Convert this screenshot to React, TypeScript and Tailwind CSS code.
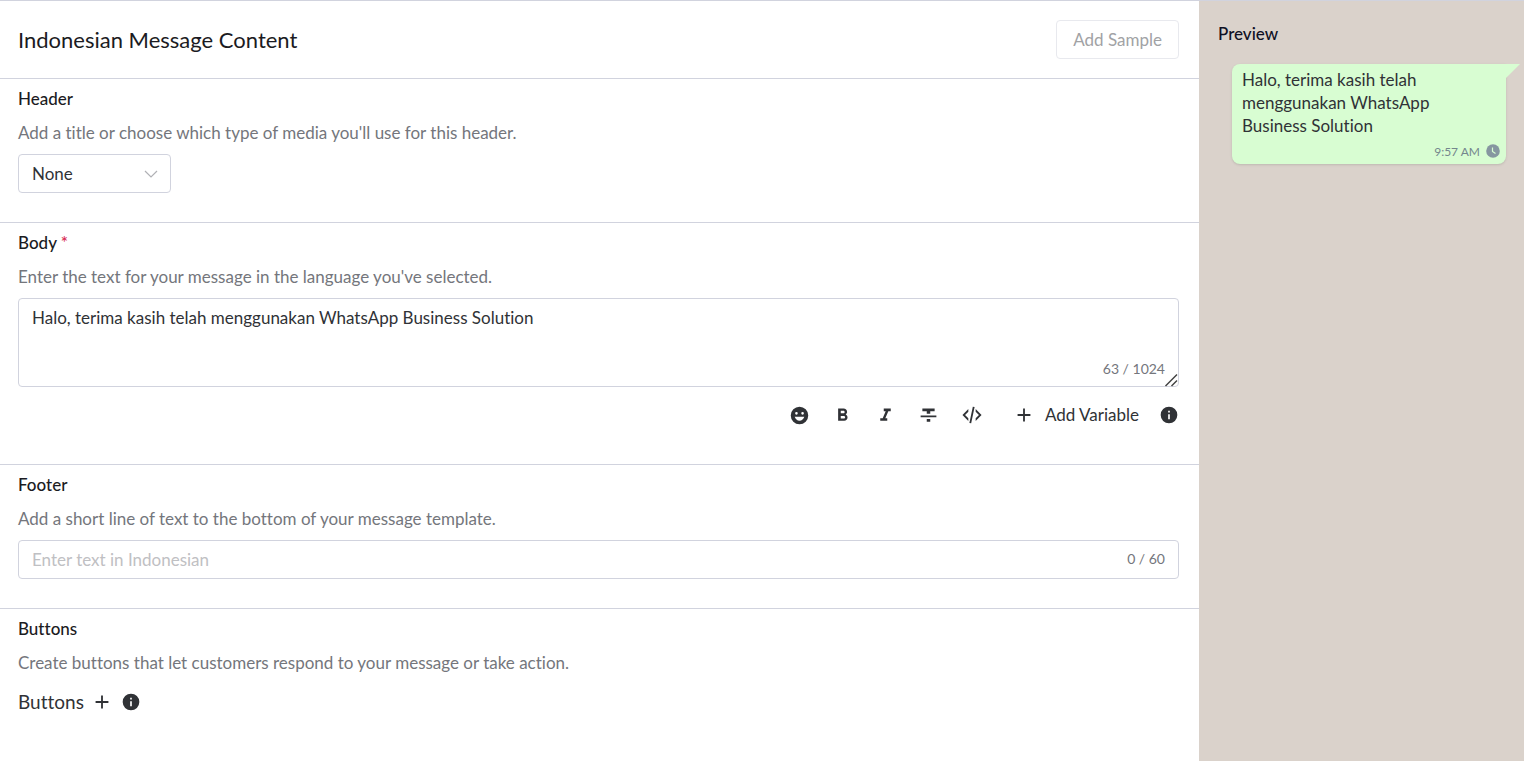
import { useState, type ReactNode } from "react";
import { MdFormatBold, MdFormatItalic, MdFormatStrikethrough } from "react-icons/md";

const BODY_TEXT = "Halo, terima kasih telah menggunakan WhatsApp Business Solution";

interface SectionProps {
  title: string;
  description: string;
  htmlFor?: string;
  required?: boolean;
  children: ReactNode;
}

function Section({ title, description, htmlFor, required, children }: SectionProps) {
  return (
    <section className="border-t border-[#d1d3de] pt-2 pr-5 pb-[29px] pl-[18px]">
      <h2 className="text-[17px] leading-6 font-medium text-[#1b1b22]">
        <label htmlFor={htmlFor}>{title}</label>
        {required && <span className="text-[#d8294f]"> *</span>}
      </h2>
      <p className="mt-[10px] mb-[9px] text-[17px] leading-6 text-[#74767c]">{description}</p>
      {children}
    </section>
  );
}

function InfoIcon() {
  return (
    <svg viewBox="0 0 24 24" className="size-5" fill="currentColor">
      <path d="M13 9h-2V7h2m0 10h-2v-6h2m-1-9A10 10 0 0 0 2 12a10 10 0 0 0 10 10 10 10 0 0 0 10-10A10 10 0 0 0 12 2Z" />
    </svg>
  );
}

function PlusIcon() {
  return (
    <svg viewBox="0 0 24 24" className="size-[22px]" fill="currentColor">
      <path d="M19 13h-6v6h-2v-6H5v-2h6V5h2v6h6v2Z" />
    </svg>
  );
}

function EmojiIcon() {
  return (
    <svg viewBox="0 0 24 24" className="size-[21px]" fill="currentColor">
      <path
        fillRule="evenodd"
        d="M12 2a10 10 0 1 0 0 20 10 10 0 0 0 0-20Zm-3.5 6a1.5 1.5 0 1 1 0 3 1.5 1.5 0 0 1 0-3Zm7 0a1.5 1.5 0 1 1 0 3 1.5 1.5 0 0 1 0-3ZM12 18c-2.6 0-4.8-1.9-5.5-4.5h11C16.8 16.1 14.6 18 12 18Z"
      />
    </svg>
  );
}

function CodeIcon() {
  return (
    <svg viewBox="0 0 24 24" className="size-[22px]" fill="currentColor">
      <path d="M12.89 3l1.96.4L11.11 21l-1.96-.4L12.89 3m6.7 9L16 8.41V5.58L22.42 12 16 18.41v-2.83L19.59 12M1.58 12L8 5.58v2.83L4.41 12 8 15.58v2.83L1.58 12Z" />
    </svg>
  );
}

export default function App() {
  const [header, setHeader] = useState("None");
  const [body, setBody] = useState(BODY_TEXT);
  const [footer, setFooter] = useState("");

  return (
    <div className="flex min-h-screen border-t border-[#d1d3de] bg-white font-['Lato',sans-serif] text-[#303236] [font-variant-ligatures:none]">
      <main className="min-w-0 flex-1">
        <header className="flex h-[77px] items-center justify-between pr-5 pl-[18px]">
          <h1 className="text-[22px] leading-7 text-[#1b1b22]">Indonesian Message Content</h1>
          <button
            type="button"
            disabled
            className="h-[39px] rounded border border-[#e8e9ee] px-4 text-[17px] text-[#a1a2a5]"
          >
            Add Sample
          </button>
        </header>

        <Section
          title="Header"
          description="Add a title or choose which type of media you'll use for this header."
          htmlFor="header"
        >
          <div className="relative w-[153px]">
            <select
              id="header"
              value={header}
              onChange={(e) => setHeader(e.target.value)}
              className="block h-[39px] w-full appearance-none rounded border border-[#d1d3de] bg-white pr-8 pl-[13px] text-[17px]"
            >
              <option>None</option>
              <option>Text</option>
              <option>Media</option>
            </select>
            <svg
              viewBox="0 0 14 8"
              className="pointer-events-none absolute top-4 right-[13px] h-2 w-[14px]"
              fill="none"
              stroke="#b0b1b5"
              strokeWidth="1.2"
            >
              <path d="M1 1l6 6 6-6" />
            </svg>
          </div>
        </Section>

        <Section
          title="Body"
          description="Enter the text for your message in the language you've selected."
          htmlFor="body"
          required
        >
          <div className="relative">
            <textarea
              id="body"
              value={body}
              maxLength={1024}
              onChange={(e) => setBody(e.target.value)}
              className="block h-[89px] w-full resize-none rounded border border-[#d1d3de] px-[13px] py-[7px] text-[17px] leading-6"
            />
            <span className="absolute right-[14px] bottom-2 text-[14px] leading-5 text-[#74767c]">
              {body.length} / 1024
            </span>
            <svg
              viewBox="0 0 14 14"
              className="pointer-events-none absolute right-px bottom-0 size-[14px]"
              fill="none"
              stroke="#444"
              strokeWidth="1.5"
            >
              <path d="M1.5 13L13 1.5M7.5 13L13 7.500" />
            </svg>
          </div>
          <div className="mt-[17px] mb-[9px] flex h-[22px] items-center justify-end">
            <div className="flex items-center gap-[22px]">
              <button type="button" aria-label="Emoji"><EmojiIcon /></button>
              <button type="button" aria-label="Bold"><MdFormatBold className="size-[21px]" /></button>
              <button type="button" aria-label="Italic"><MdFormatItalic className="size-[21px]" /></button>
              <button type="button" aria-label="Strikethrough"><MdFormatStrikethrough className="size-[21px]" /></button>
              <button type="button" aria-label="Code"><CodeIcon /></button>
            </div>
            <button type="button" className="ml-[30px] flex items-center gap-[10px] text-[17px] leading-[22px]">
              <PlusIcon />
              Add Variable
            </button>
            <button type="button" aria-label="Variable info" className="ml-5"><InfoIcon /></button>
          </div>
        </Section>

        <Section
          title="Footer"
          description="Add a short line of text to the bottom of your message template."
          htmlFor="footer"
        >
          <div className="relative">
            <input
              id="footer"
              type="text"
              value={footer}
              maxLength={60}
              placeholder="Enter text in Indonesian"
              onChange={(e) => setFooter(e.target.value)}
              className="block h-[39px] w-full rounded border border-[#d1d3de] pr-20 pl-[13px] text-[17px] placeholder:text-[#bfc0c3]"
            />
            <span className="absolute right-[14px] bottom-[10px] text-[14px] leading-5 text-[#74767c]">
              {footer.length} / 60
            </span>
          </div>
        </Section>

        <Section
          title="Buttons"
          description="Create buttons that let customers respond to your message or take action."
        >
          <div className="flex h-9 items-center">
            <span className="text-[19px] leading-6">Buttons</span>
            <button type="button" aria-label="Add button" className="ml-[7px]"><PlusIcon /></button>
            <button type="button" aria-label="Buttons info" className="ml-2"><InfoIcon /></button>
          </div>
        </Section>
      </main>

      <aside className="w-[325px] shrink-0 bg-[#dad2cb] pt-[21px] pr-[18px] pl-[19px]">
        <h2 className="text-[17px] leading-6 font-medium text-[#0e1024]">Preview</h2>
        <div className="relative mt-[18px] ml-[14px] rounded-lg rounded-tr-none bg-[#d8fdd2] px-[10px] pt-1 pb-1 text-[17px] leading-[23px] shadow-sm">
          <svg viewBox="0 0 14 14" className="absolute top-0 left-full size-[14px]" fill="#d8fdd2">
            <path d="M0 0h14L0 14Z" />
          </svg>
          <p className="w-[220px]">{body}</p>
          <div className="-mr-1 mt-[5px] flex h-[18px] items-center justify-end gap-[6px] text-[12px] text-[#74868d]">
            9:57 AM
            <svg viewBox="0 0 14 14" className="size-[14px]">
              <circle cx="7" cy="7" r="6.8" fill="#8696a0" />
              <path d="M6.5 3.5v4l3 2" fill="none" stroke="#d8fdd2" strokeWidth="1.2" />
            </svg>
          </div>
        </div>
      </aside>
    </div>
  );
}
